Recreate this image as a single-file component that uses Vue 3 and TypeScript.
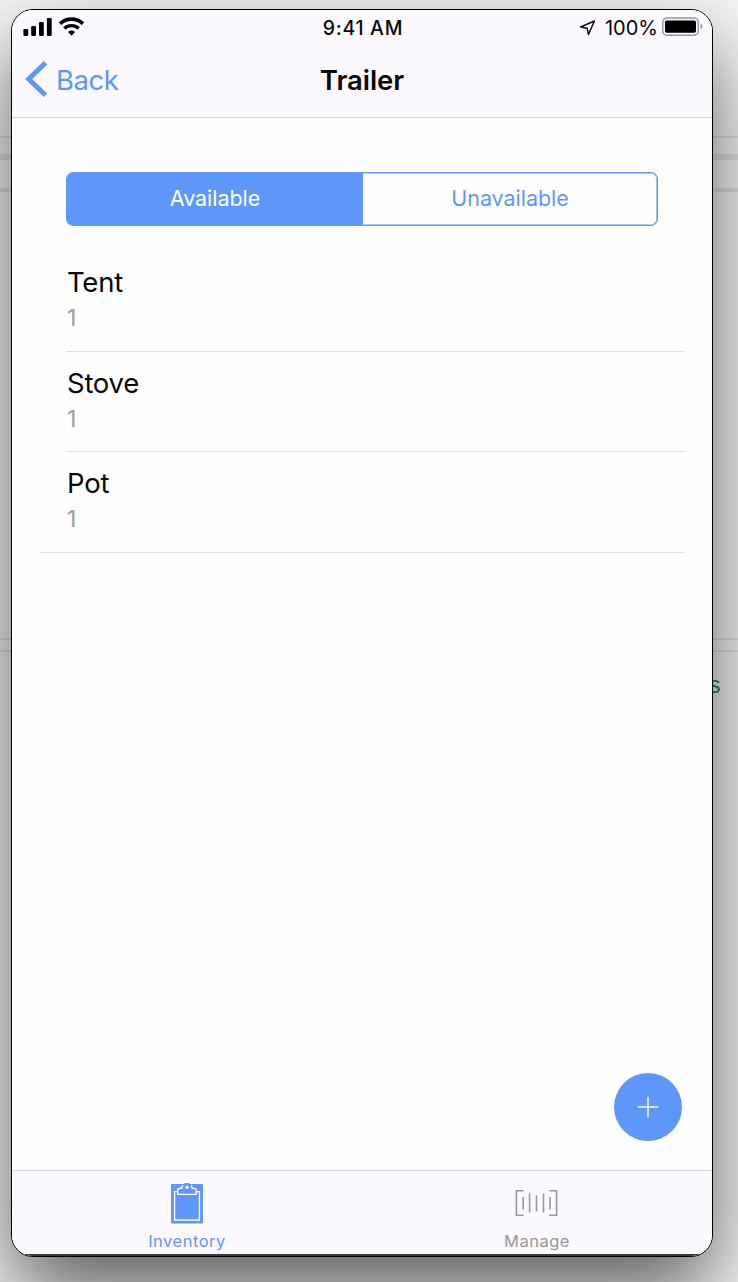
<script setup lang="ts">
import { ref } from 'vue'

interface Item {
  name: string
  count: number
}

const segments = ['Available', 'Unavailable']
const selected = ref(0)
const items: Item[] = [
  { name: 'Tent', count: 1 },
  { name: 'Stove', count: 1 },
  { name: 'Pot', count: 1 },
]
</script>

<template>
  <div class="desktop">
    <div class="rule r1"></div>
    <div class="rule r2"></div>
    <div class="rule r3"></div>
    <div class="rule r4"></div>
    <div class="rule r5"></div>
    <span class="behind">s</span>
    <main class="phone">
      <header class="top">
        <div class="status">
          <svg class="signal" width="64" height="22" viewBox="0 0 64 22">
            <rect x="0.4" y="12" width="4.8" height="7" rx="1.2" />
            <rect x="8.2" y="9" width="4.8" height="10" rx="1.2" />
            <rect x="16" y="5" width="4.8" height="14" rx="1.2" />
            <rect x="23.9" y="1" width="4.8" height="18" rx="1.2" />
            <g fill="none" stroke="#050507">
              <path d="M37 6.8a16.5 16.5 0 0 1 23 0" stroke-width="3.6" />
              <path d="M41.4 11.5a10.3 10.3 0 0 1 14.2 0" stroke-width="3.4" />
            </g>
            <path d="M45 14.9q3.5-2.7 7 0L48.5 18.7z" />
          </svg>
          <span class="time">9:41 AM</span>
          <div class="power">
            <svg width="18" height="18" viewBox="0 0 18 18">
              <path d="M1.6 8 15.4 2 9.5 15.5 8.2 9.3z" fill="none" stroke="#111" stroke-width="1.5" stroke-linejoin="round" />
            </svg>
            <span class="percent">100%</span>
            <svg class="battery" width="42" height="20" viewBox="0 0 42 20">
              <rect x="0.8" y="1" width="35.5" height="17.2" rx="4.2" fill="none" stroke="#98989c" stroke-width="1.5" />
              <rect x="3" y="3.5" width="31" height="12.2" rx="1.8" />
              <path d="M38.5 6.5q4 3 0 6z" fill="#98989c" />
            </svg>
          </div>
        </div>
        <nav class="nav">
          <a class="back">
            <svg width="24" height="38" viewBox="0 0 24 38">
              <path d="M20.5 2.8 3.7 19 20.5 35.2" fill="none" stroke="#5e97f8" stroke-width="5" />
            </svg>
            <span>Back</span>
          </a>
          <h1>Trailer</h1>
        </nav>
      </header>
      <section class="body">
        <div class="segmented">
          <button v-for="(s, i) in segments" :key="s" :class="{ on: selected === i }" @click="selected = i">{{ s }}</button>
        </div>
        <ul class="list">
          <li v-for="item in items" :key="item.name">
            <div class="name">{{ item.name }}</div>
            <div class="count">{{ item.count }}</div>
          </li>
        </ul>
      </section>
      <button class="fab">
        <svg width="22" height="22" viewBox="0 0 22 22">
          <path d="M11 .7v20.6M.7 11h20.6" stroke="#fff" stroke-width="1.4" />
        </svg>
      </button>
      <footer class="tabs">
        <a class="tab active">
          <svg width="34" height="42" viewBox="0 0 34 42">
            <rect x="1" y="2" width="32" height="39.5" rx="1" fill="#5e97f8" />
            <path d="M8.2 9.6H4.6v28.4h24.8V9.6h-3.6" fill="none" stroke="#fff" stroke-width="1.4" />
            <path d="M12.6 5.2Q13.2 1 17 1t4.4 4.2z" fill="#5e97f8" />
            <path d="M12.6 3.2q0 3.2-2 3.2h-.8q-2 0-2 2v4h18.4v-4q0-2-2-2h-.8q-2 0-2-3.2" fill="#5e97f8" stroke="#fff" stroke-width="1.4" />
            <path d="M12.8 4.4Q13.4.9 17 .9t4.2 3.5z" fill="#5e97f8" />
            <circle cx="17" cy="5.2" r="1.7" fill="#fff" />
          </svg>
          <span>Inventory</span>
        </a>
        <a class="tab">
          <svg width="44" height="42" viewBox="0 0 44 42">
            <g fill="none" stroke="#98989b" stroke-width="1.6">
              <path d="M8.6 8.7H1.4v24.6h7.2M34.4 8.7h7.2v24.6h-7.2" />
              <path d="M8.2 15v12.5M14.6 11.5v19M21.5 13.5v16M28.5 11.5v19M35 15v12.5" />
            </g>
          </svg>
          <span>Manage</span>
        </a>
      </footer>
    </main>
  </div>
</template>

<style>
body {
  margin: 0;
}
</style>

<style scoped>
.desktop {
  position: relative;
  box-sizing: border-box;
  width: 738px;
  height: 1282px;
  padding: 9px 0 0 11px;
  overflow: hidden;
  background: #f6f6f6;
  font-family: Inter, "Liberation Sans", sans-serif;
}
.rule {
  position: absolute;
  left: 0;
  width: 100%;
  height: 2px;
  background: #e2e2e2;
}
.r1 { top: 136px; }
.r2 { top: 154px; height: 6px; }
.r3 { top: 188px; height: 4px; }
.r4 { top: 638px; }
.r5 { top: 650px; }
.behind {
  position: absolute;
  left: 709px;
  top: 672px;
  font: 23px/27px "Liberation Sans", sans-serif;
  color: #2c8a35;
}
.phone {
  position: relative;
  box-sizing: border-box;
  display: flex;
  flex-direction: column;
  width: 702px;
  height: 1248px;
  border: 1px solid #000;
  border-radius: 22px;
  background: #fefefe;
  overflow: hidden;
  box-shadow: 0 38px 84px rgba(0, 0, 0, 0.62);
}
.top {
  box-sizing: border-box;
  height: 108px;
  border-bottom: 1px solid #d5d5d8;
  background: #fbf9fd;
}
.status {
  display: grid;
  grid-template-columns: 1fr auto 1fr;
  align-items: center;
  height: 35px;
  padding: 0 8px 0 11px;
  color: #08080a;
}
.time {
  margin-right: 1px;
  font-size: 19.5px;
  font-weight: 500;
  letter-spacing: 0.7px;
}
.power {
  display: flex;
  align-items: center;
  justify-content: flex-end;
}
.battery {
  margin-top: -1px;
}
.percent {
  margin: 0 4px 0 8px;
  font-size: 20px;
}
.nav {
  display: grid;
  grid-template-columns: 1fr auto 1fr;
  align-items: center;
  height: 70px;
  padding: 0 13px;
}
.back {
  display: flex;
  align-items: center;
  gap: 7px;
  margin-top: -2px;
  font-size: 27.5px;
  letter-spacing: -0.5px;
  color: #5e97f8;
}
.back span {
  padding-top: 2px;
}
h1 {
  margin: 0;
  font-size: 27.5px;
  font-weight: 600;
  letter-spacing: -0.05px;
  color: #08080a;
}
.body {
  flex: 1;
  padding: 54px 27px 0;
}
.segmented {
  box-sizing: border-box;
  display: flex;
  width: 592px;
  height: 54px;
  margin-left: 27px;
  border: 1px solid #5e97f8;
  border-radius: 7px;
  box-shadow: inset 0 0 0 0.6px #5e97f8;
  overflow: hidden;
}
.segmented button {
  flex: 1;
  padding: 0 0 2px;
  border: 0;
  background: transparent;
  font: 400 21.5px/48px Inter, "Liberation Sans", sans-serif;
  letter-spacing: -0.05px;
  color: #5e97f8;
}
.segmented .on {
  flex: 0 0 296px;
  background: #5e97f8;
  color: #fff;
}
.list {
  margin: 25px 0 0;
  padding: 0;
  list-style: none;
}
li {
  box-sizing: border-box;
  height: 100.5px;
  margin-left: 27px;
  padding-top: 14px;
  padding-left: 1px;
  border-bottom: 1px solid #e2e2e3;
}
li:last-child {
  margin-left: 0;
  padding-left: 28px;
}
.name {
  font-size: 27.5px;
  line-height: 34px;
  letter-spacing: -0.25px;
  color: #08080a;
}
.count {
  margin-top: 2px;
  font-size: 23px;
  line-height: 34px;
  color: #9c9c9e;
}
.fab {
  position: absolute;
  left: 602px;
  top: 1063px;
  display: flex;
  align-items: center;
  justify-content: center;
  width: 68px;
  height: 68px;
  padding: 0;
  border: 0;
  border-radius: 50%;
  background: #5e97f8;
}
.tabs {
  box-sizing: border-box;
  display: flex;
  height: 86px;
  border-top: 1px solid #dcdcde;
  border-bottom: 2px solid #3a3a40;
  background: #fbf9fd;
}
.tab {
  flex: 1;
  display: flex;
  flex-direction: column;
  align-items: center;
  padding-top: 11px;
  font-size: 16.5px;
  line-height: 22px;
  letter-spacing: 0.5px;
  color: #98989b;
}
.tab span {
  margin-top: 6px;
}
.tab.active {
  color: #5e97f8;
}
</style>
